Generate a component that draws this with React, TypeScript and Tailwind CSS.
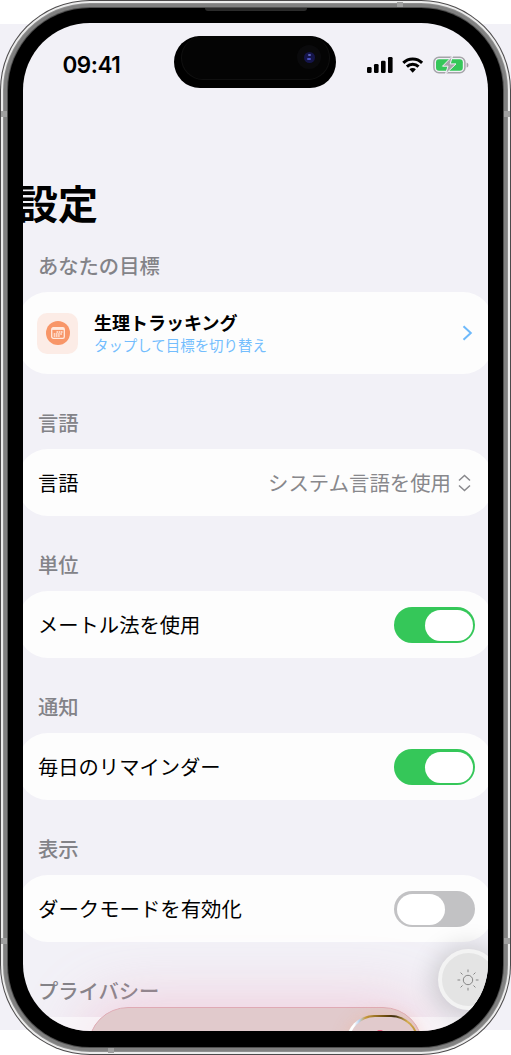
import React, { useState } from "react";

type SectionProps = {
    title: string;
    children: React.ReactNode;
    tall?: boolean;
};

const Section: React.FC<SectionProps> = ({ title, children, tall }) => (
    <section className="flex flex-col">
        <h2 className="flex h-[52px] items-center pl-[20px] pt-[3px] text-[20.3px] font-medium text-[#838388]">{title}</h2>
        <div className={`flex items-center justify-between rounded-[30px] bg-[#fdfdfd] pl-[20px] pr-[18px] ${tall ? "h-[82.5px]" : "h-[67px]"}`}>
            {children}
        </div>
    </section>
);

const Toggle: React.FC<{ initial: boolean; label: string }> = ({ initial, label }) => {
    const [on, setOn] = useState(initial);

    return (
        <button
            role="switch"
            aria-checked={on}
            aria-label={label}
            onClick={() => setOn(!on)}
            className={`mt-px flex h-[36px] w-[81px] items-center rounded-full px-[2.5px] ${on ? "justify-end bg-[#35c759]" : "justify-start bg-[#c2c2c4]"}`}
        >
            <span className="h-[31px] w-[48px] rounded-full bg-white"></span>
        </button>
    );
};

const StatusIcons: React.FC = () => (
    <svg width="102" height="18" viewBox="0 0 102 18" fill="none">
        {/* signal */}
        <g fill="#000">
            <rect x="0" y="11" width="4.6" height="6" rx="1.3" />
            <rect x="7" y="8" width="4.6" height="9" rx="1.3" />
            <rect x="14" y="4.8" width="4.6" height="12.2" rx="1.3" />
            <rect x="21" y="1" width="4.6" height="16" rx="1.3" />
        </g>
        {/* wifi */}
        <g stroke="#000" strokeWidth="3">
            <path d="M36.3 6.8a13.5 13.5 0 0 1 18.8 0" />
            <path d="M39.9 10.6a8.3 8.3 0 0 1 11.6 0" />
        </g>
        <path d="M42.5 13.3a4.6 4.6 0 0 1 6.4 0L45.7 16.7z" fill="#000" />
        {/* battery */}
        <rect x="66.9" y="1.2" width="31" height="15.6" rx="5" stroke="#a5a4a9" strokeWidth="1.5" />
        <rect x="69" y="3.2" width="26.8" height="11.6" rx="3" fill="#35c759" />
        <path d="M99.6 6.4c2.4 .8 2.4 4.4 0 5.2z" fill="#a5a4a9" />
        <path d="M85.5 0L75.5 10.2h5.5L78.5 18 89 7.9h-5.8z" fill="#a5a4a9" stroke="#f2f1f7" strokeWidth="1" />
    </svg>
);

const Island: React.FC = () => (
    <div className="h-[52.5px] w-[162px] rounded-full bg-black pl-[7px]">
        <div className="flex h-[44px] w-[149px] items-center justify-end rounded-full border border-t-0 border-[#101010] bg-[#040404] pr-[8px]">
            <div className="flex h-6 w-6 items-center justify-center rounded-full bg-[#0a0a0c]">
                <span className="flex h-[11px] w-[11px] flex-col items-center justify-center gap-[2px] rounded-full bg-[#15154a]">
                    <span className="h-[2px] w-[3px] rounded-full bg-[#5961b8]"></span>
                    <span className="h-[2px] w-[4px] rounded-full bg-[#4951c0]"></span>
                </span>
            </div>
        </div>
    </div>
);

const CalendarIcon: React.FC = () => (
    <span className="-ml-px mt-px flex h-[41px] w-[41px] items-center justify-center rounded-[10px] bg-[#fcece6]">
        <span className="flex h-6 w-6 items-center justify-center rounded-full bg-[#f89668]">
            <svg width="14" height="12" viewBox="0 0 14 12" fill="none" stroke="#ffeadf">
                <rect x=".7" y=".7" width="12.6" height="10.6" rx="1.6" strokeWidth="1.3" />
                <path d="M1 1.9h12" strokeWidth="2" />
                <path d="M5.5 5h6M2.7 7h8.8M2.7 9h6.5" strokeWidth="1.4" strokeDasharray="1.6 .6" />
            </svg>
        </span>
    </span>
);

const SunIcon: React.FC = () => (
    <svg width="22" height="22" viewBox="0 0 22 22" fill="none" stroke="#858585" strokeWidth="1" className="-ml-px">
        <circle cx="11" cy="11" r="4.7" />
        <path d="M11 .5v2.7M11 18.8v2.7M.5 11h2.7M18.8 11h2.7M3.6 3.6l1.9 1.9M16.5 16.5l1.9 1.9M3.6 18.4l1.9-1.9M16.5 5.5l1.9-1.9" />
    </svg>
);

const Screen: React.FC = () => (
    <div className="relative h-[1008px] w-full overflow-hidden rounded-[67px] bg-[#f2f1f7]">
        {/* status bar */}
        <div className="grid h-[84px] grid-cols-[151px_162px_1fr] items-center">
            <span className="pl-[39.5px] font-['Inter'] text-[22.5px] font-semibold tracking-[-0.5px] text-black">09:41</span>
            <div className="-mt-[6px]">
                <Island />
            </div>
            <div className="flex justify-end pr-[19px]">
                <StatusIcons />
            </div>
        </div>

        <main className="-mx-[5px] flex flex-col gap-[23px] pt-[66.5px]">
            <div>
                <h1 className="flex h-[66px] items-center pb-[4px] text-[40px] font-bold leading-none text-black">設定</h1>
                <Section title="あなたの目標" tall>
                    <div className="flex items-center gap-[16px]">
                        <CalendarIcon />
                        <div className="flex flex-col pt-[4px]">
                            <span className="h-[23px] text-[18px] font-bold leading-[24px] text-black">生理トラッキング</span>
                            <span className="h-[22px] text-[14.45px] leading-[23px] text-[#73bdfd]">タップして目標を切り替え</span>
                        </div>
                    </div>
                    <svg width="11" height="16" viewBox="0 0 11 16" fill="none" className="mr-[2px]">
                        <path d="M1.5 1.2L8.8 8l-7.3 6.8" stroke="#6db9fb" strokeWidth="2" />
                    </svg>
                </Section>
            </div>

            <Section title="言語">
                <span className="pt-[3px] text-[20.3px] text-black">言語</span>
                <span className="flex items-center gap-[7px] text-[20.4px] text-[#88888c]">
                    <span className="pt-[3px]">システム言語を使用</span>
                    <svg width="13" height="18" viewBox="0 0 13 18" fill="none" stroke="#88888c" strokeWidth="1.5" className="mr-[4px] mt-px">
                        <path d="M1 6.5L6.5 1.5 12 6.5M1 11.5l5.5 5 5.5-5" />
                    </svg>
                </span>
            </Section>

            <Section title="単位">
                <span className="pt-[3px] text-[20.3px] text-black">メートル法を使用</span>
                <Toggle initial={true} label="メートル法を使用" />
            </Section>

            <Section title="通知">
                <span className="pt-[3px] text-[20.3px] text-black">毎日のリマインダー</span>
                <Toggle initial={true} label="毎日のリマインダー" />
            </Section>

            <Section title="表示">
                <span className="pt-[3px] text-[20.4px] text-black">ダークモードを有効化</span>
                <Toggle initial={false} label="ダークモードを有効化" />
            </Section>

            <h2 className="flex h-[52px] items-center pl-[20px] pt-[3px] text-[20.3px] font-medium text-[#838388]">プライバシー</h2>
        </main>

        {/* floating bar, mostly below the fold */}
        <div className="absolute left-[65px] top-[984px] h-[80px] w-[335px] rounded-[46px] shadow-[0_0_60px_6px_rgba(238,150,180,0.4)]"></div>
        <div className="absolute bottom-0 left-0 h-[14px] w-full bg-white/50"></div>
        <div className="absolute left-[65px] top-[984px] flex h-[80px] w-[335px] justify-end rounded-[46px] border border-[#dfaab4] bg-[#e1cacc] pr-[3px] pt-[6.5px]">
            <div className="h-[60px] w-[73px] rounded-[28px] bg-[linear-gradient(100deg,#ffffff_0%,#ffffff_12%,#b9d3f0_17%,#c8993a_24%,#6b4b10_48%,#3d2c0c_58%,#d6ae50_75%,#a87a20_100%)] p-[2.5px] shadow-[0_0_16px_rgba(245,170,130,0.3)]">
                <div className="flex h-full w-full justify-center rounded-[26px] bg-[#e1cacc] pt-[13px]">
                    <span className="-ml-[6px] h-[5px] w-[6px] rounded-t-[2px] bg-[#ee6687]"></span>
                </div>
            </div>
        </div>

        <button
            aria-label="テーマ"
            className="absolute left-[415px] top-[926px] flex h-[61px] w-[61px] items-center justify-center rounded-full border-[4px] border-[#f3f3f3] bg-[#e4e4e4] shadow-[0_2px_26px_4px_rgba(0,0,0,0.18)]"
        >
            <SunIcon />
        </button>
    </div>
);

const App: React.FC = () => {
    return (
        <div className="relative h-[1055px] w-[511px] overflow-hidden bg-[linear-gradient(#fff_24px,#f2f1f7_24px,#f2f1f7_1030px,#fff_1030px)] font-['Liberation_Sans','Noto_Sans_CJK_JP',sans-serif]">
            {/* device frame: dark rim, highlight, steel, bezel */}
            <div className="h-[1055px] rounded-[90px] bg-[#4c4a4b] p-px">
                <div className="h-full rounded-[89px] bg-[#ececec] p-[2px]">
                    <div className="h-full rounded-[87px] bg-[#8f8f8f] p-px">
                        <div className="h-full rounded-[86px] bg-[#808080] p-[3px]">
                            <div className="h-full rounded-[83px] bg-[#505050] p-px">
                                <div className="h-full rounded-[82px] bg-black p-[15px]">
                                    <Screen />
                                </div>
                            </div>
                        </div>
                    </div>
                </div>
            </div>

            {/* earpiece and antenna bands */}
            <div className="absolute inset-0 flex flex-col justify-between">
                <div className="flex h-[11px] justify-center pt-[8px]">
                    <div className="h-[2.5px] w-[102px] rounded-b bg-[#2b2b2b]"></div>
                </div>
            </div>
            <div className="absolute inset-x-px inset-y-[111px] flex flex-col justify-between">
                <div className="flex justify-between">
                    <span className="h-[6px] w-[6px] bg-[#a0a0a0]"></span>
                    <span className="h-[6px] w-[6px] bg-[#a0a0a0]"></span>
                </div>
                <div className="flex justify-between">
                    <span className="h-[6px] w-[6px] bg-[#a0a0a0]"></span>
                    <span className="h-[6px] w-[6px] bg-[#a0a0a0]"></span>
                </div>
            </div>
            <div className="absolute inset-x-[108px] inset-y-[2px] flex flex-col justify-between">
                <span className="h-[5px] w-[6px] self-end bg-[#a0a0a0]"></span>
                <span className="h-[5px] w-[6px] self-start bg-[#a0a0a0]"></span>
            </div>
        </div>
    );
};

export default App;
